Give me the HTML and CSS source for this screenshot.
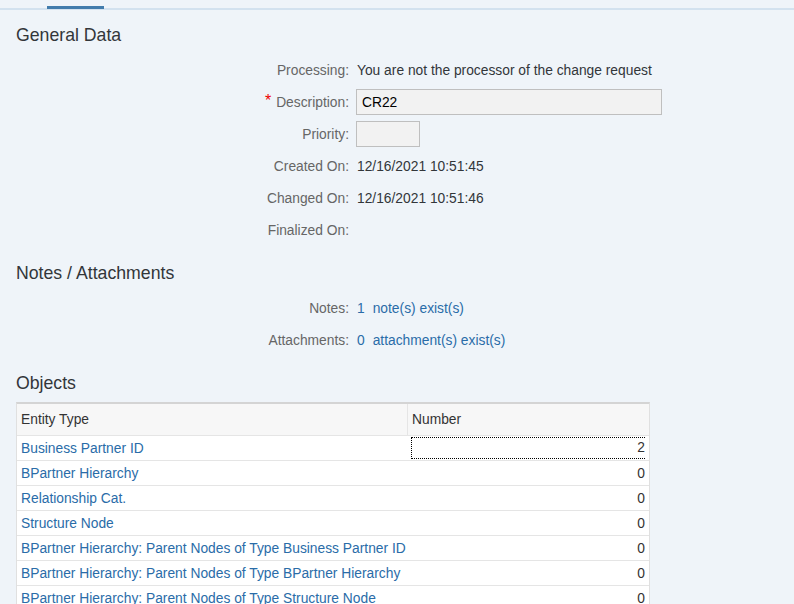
FILE: index.html
```html
<!DOCTYPE html>
<html>
<head>
<meta charset="utf-8">
<link rel="stylesheet" href="styles.css">
</head>
<body>
<div class="tabbar"><div class="tab-sel"></div></div>

<h2 class="section-title first">General Data</h2>
<div class="form">
  <div class="label">Processing:</div><div class="value">You are not the processor of the change request</div>
  <div class="label"><span class="req">*</span>Description:</div><div class="value"><div class="input wide">CR22</div></div>
  <div class="label">Priority:</div><div class="value"><div class="input narrow"></div></div>
  <div class="label">Created On:</div><div class="value">12/16/2021 10:51:45</div>
  <div class="label">Changed On:</div><div class="value">12/16/2021 10:51:46</div>
  <div class="label">Finalized On:</div><div class="value"></div>
</div>

<h2 class="section-title">Notes / Attachments</h2>
<div class="form">
  <div class="label">Notes:</div><div class="value link"><span class="count">1</span>note(s) exist(s)</div>
  <div class="label">Attachments:</div><div class="value link"><span class="count">0</span>attachment(s) exist(s)</div>
</div>

<h2 class="section-title">Objects</h2>
<div class="table">
  <div class="row head"><div class="c1">Entity Type</div><div class="c2">Number</div></div>
  <div class="row"><div class="c1 link">Business Partner ID</div><div class="c2 num"><span class="focus">2</span></div></div>
  <div class="row"><div class="c1 link">BPartner Hierarchy</div><div class="c2 num">0</div></div>
  <div class="row"><div class="c1 link">Relationship Cat.</div><div class="c2 num">0</div></div>
  <div class="row"><div class="c1 link">Structure Node</div><div class="c2 num">0</div></div>
  <div class="row"><div class="c1 link">BPartner Hierarchy: Parent Nodes of Type Business Partner ID</div><div class="c2 num">0</div></div>
  <div class="row"><div class="c1 link">BPartner Hierarchy: Parent Nodes of Type BPartner Hierarchy</div><div class="c2 num">0</div></div>
  <div class="row"><div class="c1 link">BPartner Hierarchy: Parent Nodes of Type Structure Node</div><div class="c2 num">0</div></div>
</div>
</body>
</html>
```

FILE: styles.css
```css
html, body {
  margin: 0;
  padding: 0;
  background: #eff4f9;
  font-family: "Liberation Sans", Arial, sans-serif;
  font-size: 13.8px;
  color: #32363a;
  overflow: hidden;
}
.tabbar {
  height: 8px;
  border-bottom: 2px solid #d3e2ef;
  position: relative;
}
.tab-sel {
  position: absolute;
  left: 47px;
  width: 57px;
  bottom: -1px;
  height: 3px;
  background: #427cac;
}
.section-title {
  margin: 15px 0 7px 0;
  padding-left: 16px;
  font-size: 17.7px;
  font-weight: normal;
  line-height: 24px;
  height: 24px;
  color: #32363a;
}
.section-title.first {
  margin-top: 13px;
}
.form {
  display: grid;
  grid-template-columns: 349px 1fr;
  column-gap: 7px;
  grid-auto-rows: 32px;
}
.label {
  text-align: right;
  color: #666;
  display: flex;
  align-items: center;
  justify-content: flex-end;
}
.req {
  color: #e00;
  margin-right: 5px;
  font-size: 16px;
  position: relative;
  top: -1px;
}
.value {
  display: flex;
  align-items: center;
  padding-left: 1px;
}
.value.link {
  color: #2a6ca8;
}
.count {
  margin-right: 8px;
}
.input {
  box-sizing: border-box;
  height: 26px;
  border: 1px solid #bfbfbf;
  background: #f2f2f2;
  padding-left: 5px;
  display: flex;
  align-items: center;
  color: #000;
  margin-left: -1px;
}
.input.wide { width: 306px; }
.input.narrow { width: 64px; }

.table {
  margin-left: 16px;
  width: 634px;
  border-top: 2px solid #d4d4d4;
  border-left: 1px solid #e0e0e0;
  border-right: 1px solid #e0e0e0;
  box-sizing: border-box;
  background: #fff;
}
.row {
  display: flex;
  height: 25px;
  border-bottom: 1px solid #e5e5e5;
  box-sizing: border-box;
}
.row.head {
  height: 32px;
  background: #f7f7f7;
  color: #333;
}
.c1 {
  width: 391px;
  padding-left: 4px;
  display: flex;
  align-items: center;
  box-sizing: border-box;
  white-space: nowrap;
}
.head .c1 { border-right: 1px solid #e5e5e5; }
.c2 {
  flex: 1;
  display: flex;
  align-items: center;
  padding-left: 4px;
  box-sizing: border-box;
}
.c2.num {
  justify-content: flex-end;
  padding-right: 4px;
  padding-left: 3px;
  color: #333;
}
.link { color: #2a6ca8; }
.focus {
  display: block;
  width: 100%;
  box-sizing: border-box;
  text-align: right;
  height: 22px;
  line-height: 20px;
  border: 1px dotted #000;
  border-right: none;
}
```
